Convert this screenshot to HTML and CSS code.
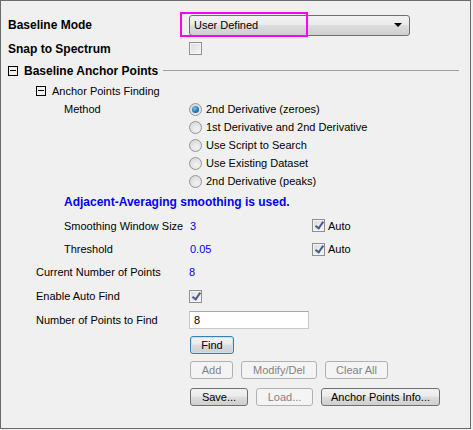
FILE: index.html
```html
<!DOCTYPE html>
<html>
<head>
<meta charset="utf-8">
<link rel="stylesheet" href="styles.css">
</head>
<body>
<div class="panel">
  <div class="row r1">
    <div class="label bold">Baseline Mode</div>
    <div class="ctrl">
      <div class="select"><span>User Defined</span><span class="arrow"></span></div>
      <div class="highlight"></div>
    </div>
  </div>
  <div class="row r2">
    <div class="label bold">Snap to Spectrum</div>
    <div class="ctrl"><span class="check"></span></div>
  </div>
  <div class="row r3">
    <span class="tbox"></span>
    <span class="bold sect">Baseline Anchor Points</span>
    <span class="rule"></span>
  </div>
  <div class="row r4 ind1">
    <span class="tbox"></span>
    <span class="sub">Anchor Points Finding</span>
  </div>
  <div class="row rr">
    <div class="label ind2">Method</div>
    <div class="ctrl"><span class="radio on"></span><span class="rtext">2nd Derivative (zeroes)</span></div>
  </div>
  <div class="row rr">
    <div class="label"></div>
    <div class="ctrl"><span class="radio"></span><span class="rtext">1st Derivative and 2nd Derivative</span></div>
  </div>
  <div class="row rr">
    <div class="label"></div>
    <div class="ctrl"><span class="radio"></span><span class="rtext">Use Script to Search</span></div>
  </div>
  <div class="row rr">
    <div class="label"></div>
    <div class="ctrl"><span class="radio"></span><span class="rtext">Use Existing Dataset</span></div>
  </div>
  <div class="row rr">
    <div class="label"></div>
    <div class="ctrl"><span class="radio"></span><span class="rtext">2nd Derivative (peaks)</span></div>
  </div>
  <div class="row rblue">
    <div class="ind2 bold blue">Adjacent-Averaging smoothing is used.</div>
  </div>
  <div class="row rsm">
    <div class="label ind2">Smoothing Window Size</div>
    <div class="ctrl val"><span class="blue valtext">3</span><span class="check on"></span><span class="auto">Auto</span></div>
  </div>
  <div class="row rth">
    <div class="label ind2">Threshold</div>
    <div class="ctrl val"><span class="blue valtext">0.05</span><span class="check on"></span><span class="auto">Auto</span></div>
  </div>
  <div class="row rcur">
    <div class="label ind1">Current Number of Points</div>
    <div class="ctrl"><span class="blue">8</span></div>
  </div>
  <div class="row ren">
    <div class="label ind1">Enable Auto Find</div>
    <div class="ctrl"><span class="check on"></span></div>
  </div>
  <div class="row rnum">
    <div class="label ind1">Number of Points to Find</div>
    <div class="ctrl"><div class="input">8</div></div>
  </div>
  <div class="row rfind">
    <div class="label"></div>
    <div class="ctrl"><button class="btn default w-find">Find</button></div>
  </div>
  <div class="row radd">
    <div class="label"></div>
    <div class="ctrl gap8">
      <button class="btn dis w-add">Add</button>
      <button class="btn dis w-mod">Modify/Del</button>
      <button class="btn dis w-clr">Clear All</button>
    </div>
  </div>
  <div class="row rsave">
    <div class="label"></div>
    <div class="ctrl gap8">
      <button class="btn w-save">Save...</button>
      <button class="btn dis w-load">Load...</button>
      <button class="btn w-info">Anchor Points Info...</button>
    </div>
  </div>
</div>
</body>
</html>
```
FILE: styles.css
```css
* { box-sizing: border-box; }
html, body { margin: 0; padding: 0; background: #f0f0f0; }
body {
  font-family: "Liberation Sans", Arial, sans-serif;
  font-size: 11px;
  color: #000;
  width: 473px;
  height: 430px;
  overflow: hidden;
}
.panel {
  width: 471px;
  height: 429px;
  border: 1px solid #6b6b6b;
  background: #f0f0f0;
  padding: 12px 0 0 7px;
}
.row {
  display: flex;
  align-items: center;
  white-space: nowrap;
}
.label { width: 181px; flex: none; }
.ctrl { display: flex; align-items: center; position: relative; }
.bold { font-weight: bold; font-size: 12px; }
.blue { color: #0000ff; }
.ind1 { padding-left: 28px; }
.ind2 { padding-left: 56px; }

.r1 { height: 24px; }
.r2 { height: 23px; }
.r3 { height: 21px; }
.r4 { height: 19px; }
.rr { height: 18px; }
.rblue { height: 23px; }
.rsm { height: 25px; }
.rth { height: 22px; }
.rcur { height: 24px; }
.ren { height: 24px; }
.rnum { height: 24px; }
.rfind { height: 25px; }
.radd { height: 26px; }
.rsave { height: 27px; }

.select {
  width: 221px;
  height: 21px;
  border: 1px solid #707070;
  border-radius: 3px;
  background: linear-gradient(#f2f2f2 0%, #ebebeb 45%, #dddddd 50%, #cfcfcf 100%);
  display: flex;
  align-items: center;
  justify-content: space-between;
  padding: 0 7px 0 4px;
  font-size: 11px;
}
.arrow {
  width: 0; height: 0;
  border-left: 4px solid transparent;
  border-right: 4px solid transparent;
  border-top: 4px solid #000;
}
.highlight {
  position: absolute;
  left: -9px;
  top: -3px;
  width: 128px;
  height: 25px;
  border: 2px solid #ff00ff;
}

.check {
  width: 13px; height: 13px;
  border: 1px solid #8e8f8f;
  background: linear-gradient(135deg, #dcdcdc, #f6f6f6);
  box-shadow: inset 0 0 0 1px #f4f4f4;
  flex: none;
  position: relative;
}
.check.on::after {
  content: "";
  position: absolute;
  left: 4px; top: 0px;
  width: 3px; height: 7px;
  border-right: 2px solid #4a5b8c;
  border-bottom: 2px solid #4a5b8c;
  transform: rotate(35deg);
}

.tbox {
  width: 10px; height: 10px;
  border: 1px solid #000;
  position: relative;
  flex: none;
  margin-right: 6px;
}
.tbox::after {
  content: "";
  position: absolute;
  left: 1px; top: 3px;
  width: 6px; height: 1px;
  background: #000;
}
.rule {
  flex: 1;
  height: 1px;
  background: #a0a0a0;
  margin: 0 11px 0 5px;
}
.sub { font-size: 11px; }

.radio {
  width: 13px; height: 13px;
  border-radius: 50%;
  border: 1px solid #959595;
  background: radial-gradient(circle at 60% 65%, #f4f4f4, #d2d2d2);
  flex: none;
  position: relative;
}
.radio.on::after {
  content: "";
  position: absolute;
  left: 2px; top: 2px;
  width: 7px; height: 7px;
  border-radius: 50%;
  background: radial-gradient(circle at 40% 35%, #7ec8f0, #1a6fb0 60%, #0d3f6e);
}
.rtext { margin-left: 4px; }

.valtext { width: 123px; padding-left: 1px; }
.auto { margin-left: 3px; }

.input {
  width: 120px;
  height: 18px;
  background: #fff;
  border: 1px solid #c8c8c8;
  border-top-color: #a8a8a8;
  padding: 1px 4px;
  font-size: 11px;
  line-height: 14px;
}

.btn {
  height: 18px;
  border: 1px solid #707070;
  border-radius: 3px;
  background: linear-gradient(#f2f2f2 0%, #ebebeb 45%, #dddddd 50%, #cfcfcf 100%);
  font-family: "Liberation Sans", Arial, sans-serif;
  font-size: 11px;
  color: #000;
  padding: 0;
  margin: 0;
  line-height: 14px;
  flex: none;
}
.btn.default {
  border-color: #3c7fb1;
  box-shadow: inset 0 0 0 1px #c0e4f8;
}
.btn.dis {
  border-color: #adb2b5;
  background: #f4f4f4;
  color: #838383;
}
.ctrl.gap8 { gap: 8px; }
.w-find { width: 44px; margin-left: 1px; }
.w-add { width: 43px; margin-left: 1px; }
.w-mod { width: 76px; }
.w-clr { width: 63px; }
.w-save { width: 58px; margin-left: 1px; }
.w-load { width: 57px; }
.w-info { width: 119px; }
```
